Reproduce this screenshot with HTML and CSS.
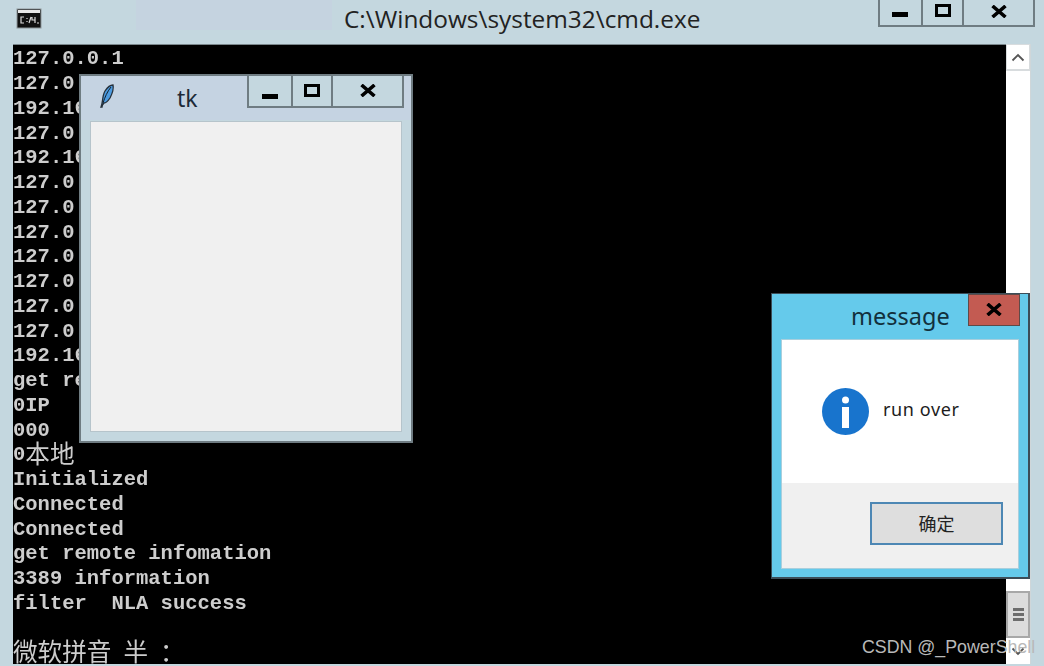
FILE: index.html
```html
<!DOCTYPE html>
<html lang="zh">
<head>
<meta charset="utf-8">
<title>cmd.exe</title>
<link rel="stylesheet" href="styles.css">
</head>
<body>
<div class="cmd">
  <header class="cmd-title">
    <svg class="cmd-icon" width="26" height="22" viewBox="0 0 26 22">
      <rect x="1" y="1" width="24" height="19" fill="#111" stroke="#8d9699"/>
      <rect x="2" y="2" width="22" height="3" fill="#e8e8e8"/>
      <path d="M8 9H5v6h3M11 10v1M11 13v1M15 9l-2 6M16 9v3h3M19 9v6M21 15h2" stroke="#ddd" stroke-width="1.2" fill="none"/>
    </svg>
    <div class="cmd-tint"></div>
    <div class="cmd-name">C:\Windows\system32\cmd.exe</div>
    <div class="caption cmd-caption">
      <span class="cap cap-min"><i class="glyph-min"></i></span>
      <span class="cap cap-max"><i class="glyph-max"></i></span>
      <span class="cap cap-close"><svg width="16" height="13" viewBox="0 0 16 13"><path d="M1.500 1l13 11M14.500 1L1.500 12" stroke="#000" stroke-width="3.600"/></svg></span>
    </div>
  </header>
  <main class="cmd-body">
    <pre class="console">127.0.0.1
127.0.0.1
192.168.0.1
127.0.0.1
192.168.0.1
127.0.0.1
127.0.0.1
127.0.0.1
127.0.0.1
127.0.0.1
127.0.0.1
127.0.0.1
192.168.0.1
get remote
0IP
000
0<span class="cjk">本地</span>
Initialized
Connected
Connected
get remote infomation
3389 information
filter  NLA success

<span class="cjk ime">微软拼音 半 ：</span></pre>
    <div class="scrollbar">
      <div class="sb-btn sb-up"><svg width="14" height="9" viewBox="0 0 14 9"><path d="M1.500 7.500L7 2l5.500 5.500" fill="none" stroke="#555" stroke-width="1.800"/></svg></div>
      <div class="sb-track"></div>
      <div class="sb-thumb"><i></i><i></i><i></i></div>
      <div class="sb-btn sb-down"><svg width="14" height="9" viewBox="0 0 14 9"><path d="M1.500 1.500L7 7l5.500-5.500" fill="none" stroke="#555" stroke-width="1.800"/></svg></div>
    </div>
  </main>
</div>

<section class="tk">
  <div class="tk-titlebar"></div>
  <svg class="tk-feather" width="18" height="26" viewBox="0 0 18 26">
    <path d="M3 24C5 20 4 13 7 8c2-3 5-6 8-6 1 4-1 9-3 13-2 3-4 5-6 5-1 1-2 3-2 4z" fill="#4d9be0" stroke="#26303a" stroke-width="1.300"/>
    <path d="M5 20c2-6 4-11 8-16" stroke="#12202c" stroke-width="1" fill="none"/>
  </svg>
  <div class="tk-name">tk</div>
  <div class="caption tk-caption">
    <span class="cap tk-min"><i class="glyph-min"></i></span>
    <span class="cap tk-max"><i class="glyph-max"></i></span>
    <span class="cap tk-close"><svg width="16" height="13" viewBox="0 0 16 13"><path d="M1.500 1l13 11M14.500 1L1.500 12" stroke="#000" stroke-width="3.600"/></svg></span>
  </div>
  <div class="tk-client"></div>
</section>

<section class="msg">
  <div class="msg-name">message</div>
  <div class="msg-close"><svg width="16" height="13" viewBox="0 0 16 13"><path d="M1.500 1l13 11M14.500 1L1.500 12" stroke="#000" stroke-width="3.600"/></svg></div>
  <div class="msg-client">
    <div class="msg-main">
      <svg class="msg-icon" width="47" height="47" viewBox="0 0 47 47">
        <circle cx="23.500" cy="23.500" r="23.500" fill="#1874cd"/>
        <circle cx="23.500" cy="12" r="3.500" fill="#fff"/>
        <rect x="20" y="19" width="7" height="21" fill="#fff"/>
      </svg>
      <span class="msg-text">run over</span>
    </div>
    <div class="msg-foot"><button class="msg-ok">确定</button></div>
  </div>
</section>

<div class="watermark">CSDN @_PowerShell</div>
</body>
</html>
```
FILE: styles.css
```css
html, body { margin: 0; padding: 0; }
body {
  width: 1044px;
  height: 666px;
  overflow: hidden;
  position: relative;
  background: #c4d7df;
  font-family: "Noto Sans", "Noto Sans CJK SC", sans-serif;
}
.cmd { display: flex; flex-direction: column; height: 666px; }
.cmd-title { height: 44px; display: flex; position: relative; flex: none; }
.cmd-icon { position: absolute; left: 16px; top: 8px; }
.cmd-tint { position: absolute; left: 136px; top: 0; width: 196px; height: 30px; background: #c5d3e0; }
.cmd-name {
  position: absolute; left: 344px; top: 3px;
  font-size: 24.400px; line-height: 32px; color: #222;
  font-family: "Open Sans", "Noto Sans", sans-serif;
  white-space: nowrap;
}
.caption { display: flex; position: absolute; border: 2px solid #6f7c82; border-top: 0; box-sizing: border-box; }
.cap { display: flex; align-items: center; justify-content: center; box-sizing: border-box; border-right: 2px solid #6f7c82; }
.cap:last-child { border-right: 0; }
.glyph-min { display: block; width: 16px; height: 5px; background: #000; }
.glyph-max { display: block; width: 16px; height: 13px; box-sizing: border-box; border: 3px solid #000; }
.cmd-caption { left: 878px; top: 0; height: 27px; width: 157px; }
.cap-min { width: 43px; padding-top: 1px; }
.cap-min .glyph-min { margin-top: 3px; margin-right: 2px; }
.cap-max { width: 41px; padding-bottom: 4px; }
.cap-close { width: 69px; padding-bottom: 2px; }
.cmd-body { display: flex; margin: 0 0 2px 13px; flex: 1; min-height: 0; width: 1018px; }
.console {
  flex: 1; margin: 0; background: #000; color: #cdcdcd;
  border-top: 1px solid #7b878c;
  padding-top: 2.300px; overflow: hidden;
  font-family: "Liberation Mono", "Noto Sans CJK SC", monospace;
  font-weight: 700; font-size: 20.500px; line-height: 24.750px;
  filter: blur(0.4px);
}
.cjk { font-weight: 400; font-family: "Noto Sans CJK SC", monospace; font-size: 24.600px; line-height: 1px; vertical-align: -3px; }
.ime { word-spacing: 6.500px; }
.scrollbar { width: 25px; flex: none; display: flex; flex-direction: column; background: #fff; border-right: 1px solid #cfd6d9; box-sizing: border-box; }
.sb-btn { height: 26px; flex: none; display: flex; align-items: center; justify-content: center; background: #fff; }
.sb-up { border: 1px solid #d8dcde; border-bottom-width: 2px; height: 27px; box-sizing: border-box; }
.sb-track { flex: 1; }
.sb-thumb {
  flex: none; height: 47px; box-sizing: border-box;
  background: #dcdcdc; border: 2px solid #a8a8a8;
  display: flex; flex-direction: column; align-items: center; justify-content: center; gap: 2px;
}
.sb-thumb i { display: block; width: 11px; height: 3px; background: #6d6d6d; }

.tk {
  position: absolute; left: 79px; top: 74px; width: 334px; height: 369px;
  box-sizing: border-box; background: #c4d7df;
  border: 2px solid #6f7c82;
}
.tk-titlebar { position: absolute; left: 0; top: 0; right: 0; height: 44px; background: #c5d3e2; }
.tk-feather { position: absolute; left: 17px; top: 7px; }
.tk-name { position: absolute; left: 96px; top: 6px; font-size: 23px; line-height: 32px; color: #1c2a38; }
.tk-caption { left: 166px; top: 0; width: 157px; height: 32px; background: #c4d7df; }
.tk-min { width: 44px; padding-top: 10px; }
.tk-max { width: 40px; padding-bottom: 2px; }
.tk-close { width: 69px; padding-bottom: 2px; }
.tk-client {
  position: absolute; left: 10px; top: 46px; width: 310px; height: 309px;
  background: #f0f0f0; box-shadow: 0 0 0 1px #b6c4cb;
}

.msg {
  position: absolute; left: 771px; top: 293px; width: 259px; height: 286px;
  box-sizing: border-box; background: #65caeb;
  border: 1px solid #3c4d58; border-bottom-width: 2px; border-right-width: 2px;
}
.msg-name { position: absolute; left: 79px; top: 5px; font-size: 23.500px; line-height: 34px; color: #12303c; }
.msg-close {
  position: absolute; left: 196px; top: 0; width: 52px; height: 32px; box-sizing: border-box;
  background: #c35b52; border: 1px solid #5f4a48;
  display: flex; justify-content: center; padding-top: 8px;
}
.msg-client {
  position: absolute; left: 10px; top: 46px; width: 236px; height: 228px;
  background: #fff; display: flex; flex-direction: column; box-shadow: 0 0 0 1px #a9cfdd;
}
.msg-main { flex: 1; display: flex; align-items: center; padding: 0 0 0 40px; gap: 14px; }
.msg-text { font-size: 18px; letter-spacing: 0.600px; color: #1d1d1d; margin-top: -5px; }
.msg-foot { height: 85px; flex: none; background: #f0f0f0; display: flex; justify-content: flex-end; align-items: flex-start; padding: 19px 15px 0 0; box-sizing: border-box; }
.msg-ok {
  width: 133px; height: 43px; box-sizing: border-box;
  background: #dedede; border: 2px solid #4d87b4; border-radius: 0;
  font-family: "Noto Sans CJK SC", sans-serif; font-size: 18px; color: #222; padding: 0 0 2px;
}
.watermark {
  position: absolute; left: 862px; top: 635px;
  font-family: "Liberation Sans", sans-serif; font-size: 17.800px; line-height: 24px;
  color: #b9b9b9; white-space: nowrap;
}
```
